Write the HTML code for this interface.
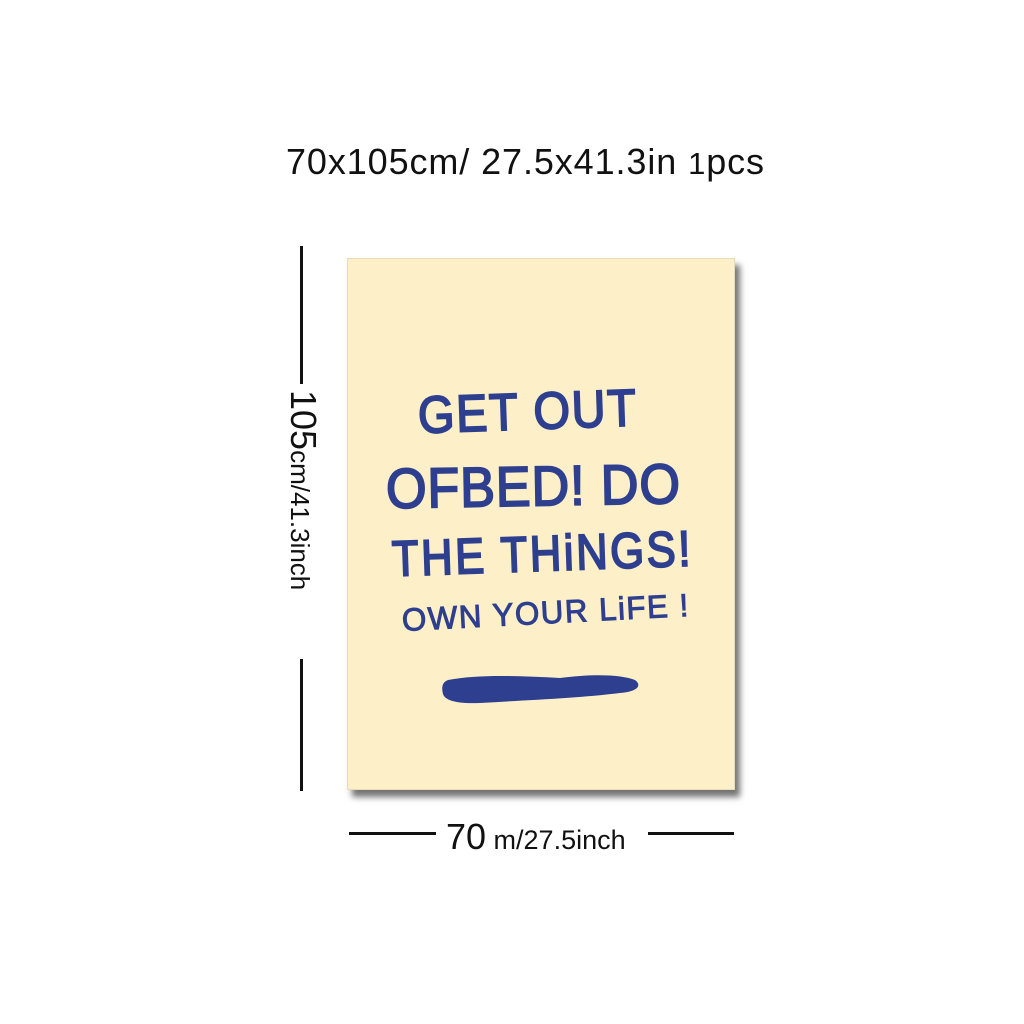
<!DOCTYPE html>
<html><head><style>
body{margin:0;width:1024px;height:1024px;background:#fff;position:relative;overflow:hidden;font-family:"Liberation Sans",sans-serif;}
.a{position:absolute;white-space:nowrap}
.poster{position:absolute;left:347px;top:258px;width:388px;height:532px;background:#fdf0c9;box-shadow:5px 7px 6px rgba(0,0,0,0.55);border:1px solid #e8dcb8;box-sizing:border-box}
.h{color:#2e3f8f;font-weight:normal;-webkit-text-stroke:2px #2e3f8f;font-family:"Liberation Sans Narrow","Liberation Sans",sans-serif;transform-origin:0 50%}
</style></head><body>
<div class="a" style="left:286px;top:141px;font-size:36px;color:#111;letter-spacing:0.9px">70x105cm/ 27.5x41.3in <span style="font-size:31px">1</span>pcs</div>
<div class="a" style="left:300px;top:246px;width:3px;height:138px;background:#111"></div>
<div class="a" style="left:300px;top:659px;width:3px;height:132px;background:#111"></div>
<div class="a" style="left:324px;top:390px;transform-origin:0 0;transform:rotate(90deg);font-size:26px;color:#111"><span style="font-size:36px">105</span>cm/41.3inch</div>
<div class="poster"></div>
<div class="a h" style="left:418px;top:386px;font-size:52px;transform:rotate(-2deg) scaleX(0.9);letter-spacing:2px">GET OUT</div>
<div class="a h" style="left:386px;top:456px;font-size:56px;transform:rotate(-1deg) scaleX(0.93);letter-spacing:1px">OFBED! DO</div>
<div class="a h" style="left:392px;top:530px;font-size:50px;transform:rotate(-2deg) scaleX(0.87);letter-spacing:3px">THE THiNGS!</div>
<div class="a h" style="left:402px;top:602px;font-size:32px;transform:rotate(-3deg) scaleX(0.98);letter-spacing:1.5px;-webkit-text-stroke:1px #2e3f8f">OWN YOUR LiFE !</div>
<svg class="a" style="left:440px;top:670px" width="205" height="45"><path d="M8 10 C40 4 80 6 120 8 C150 4 180 4 195 10 C203 16 196 22 180 23 C140 28 90 30 40 33 C15 34 5 30 3 24 C1 16 3 12 8 10Z" fill="#2e3f8f"/></svg>
<div class="a" style="left:349px;top:832px;width:87px;height:3px;background:#111"></div>
<div class="a" style="left:648px;top:832px;width:86px;height:3px;background:#111"></div>
<div class="a" style="left:446px;top:816px;font-size:27px;color:#111"><span style="font-size:36px">70</span> m/27.5inch</div>
</body></html>
